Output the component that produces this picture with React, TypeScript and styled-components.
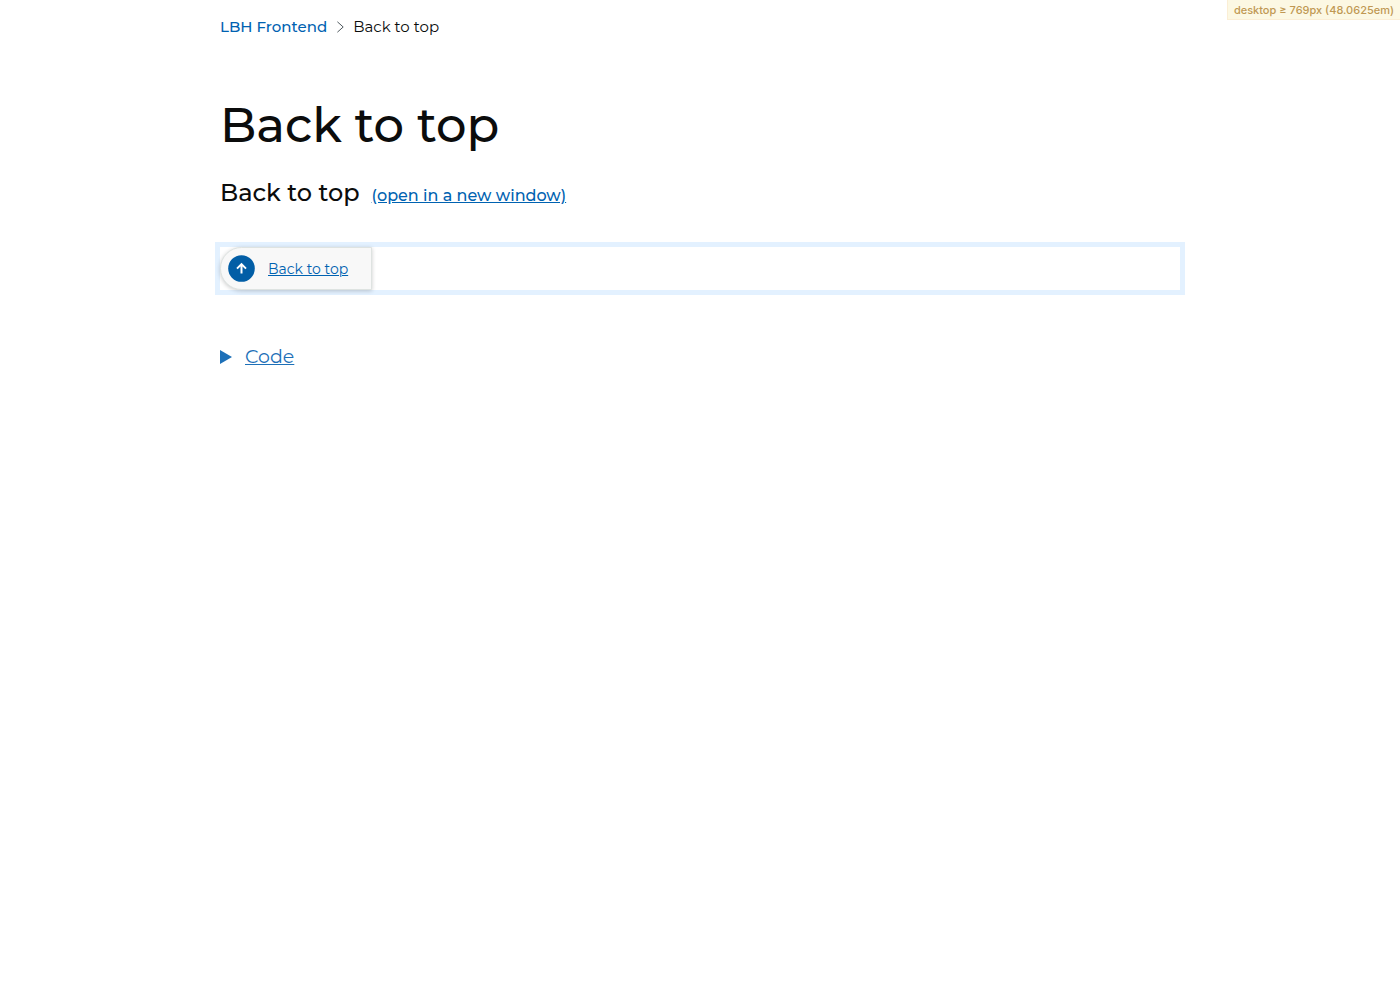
import React from "react";
import styled, { createGlobalStyle } from "styled-components";

const GlobalStyle = createGlobalStyle`
  *, *::before, *::after { box-sizing: border-box; }
  body {
    margin: 0;
    background: #fff;
    color: #0b0c0c;
    font-family: Montserrat, Inter, "Open Sans", sans-serif;
    -webkit-font-smoothing: antialiased;
  }
`;

const Container = styled.div`
  max-width: 1000px;
  margin: 0 auto;
  padding: 0 20px;
`;

const Link = styled.a`
  color: #0062b1;
  text-decoration: underline;
`;

const BreakpointLabel = styled.div`
  position: absolute;
  top: 0;
  right: 0;
  padding: 3px 6px 2px;
  border: 1px solid #fbeed5;
  border-top: 0;
  border-right: 0;
  background: #fcf8e3;
  color: #c09853;
  font-family: Inter, sans-serif;
  font-size: 11px;
  line-height: 14px;
  font-weight: 500;
`;

const BreadcrumbList = styled.ol`
  display: flex;
  align-items: center;
  gap: 9px;
  margin: 0;
  padding: 15px 0 0;
  list-style: none;
  font-size: 15px;
  line-height: 24px;
`;

const Crumb = styled.li`
  display: flex;
  align-items: center;
  gap: 9px;
`;

const CrumbLink = styled.a`
  color: #0062b1;
  font-weight: 500;
  text-decoration: none;
`;

const Title = styled.h1`
  margin: 56px 0 0;
  font-size: 48px;
  line-height: 60px;
  font-weight: 500;
`;

const ExampleHeading = styled.h2`
  display: flex;
  align-items: baseline;
  gap: 12px;
  margin: 22px 0 0;
  font-size: 24px;
  line-height: 32px;
  font-weight: 500;
`;

const NewWindowLink = styled(Link)`
  font-size: 16px;
  line-height: 24px;
`;

const Preview = styled.div`
  display: flex;
  margin: 33px -5px 0;
  border: 5px solid #e3f1ff;
`;

const BackToTop = styled(Link)`
  display: flex;
  align-items: center;
  gap: 13px;
  width: 152px;
  height: 43px;
  padding-left: 7px;
  border: 1px solid #dee3e1;
  border-radius: 22px 0 0 22px;
  background: #f8f8f8;
  box-shadow: 0 1px 4px rgba(0, 0, 0, 0.2);
  font-size: 14px;
  line-height: 20px;
  white-space: nowrap;
`;

const Details = styled.details`
  margin-top: 48px;
  color: #1d70b8;
`;

const Summary = styled.summary`
  display: flex;
  align-items: center;
  gap: 13px;
  width: fit-content;
  font-size: 19px;
  line-height: 28px;
  font-weight: 400;
  cursor: pointer;

  &::before {
    content: "";
    border-style: solid;
    border-width: 7px 0 7px 12px;
    border-color: transparent transparent transparent #1d70b8;
  }

  details[open] > &::before {
    transform: rotate(90deg);
  }
`;

const SummaryText = styled.span`
  text-decoration: underline;
`;

const ChevronIcon = () => (
  <svg width="8" height="12" viewBox="0 0 8 12" fill="none" stroke="#505a5f" aria-hidden="true">
    <path d="M1.4 .8 7.2 6 1.4 11.2" />
  </svg>
);

const ArrowIcon = () => (
  <svg width="27" height="27" viewBox="0 0 27 27" fill="none" aria-hidden="true">
    <circle cx="13.5" cy="13.5" r="13.3" fill="#025ea6" />
    <path d="M13.5 18.5V9.3M9 13.6l4.5-4.5 4.5 4.5" stroke="#fff" strokeWidth="2" />
  </svg>
);

export default function App() {
  return (
    <>
      <GlobalStyle />
      <BreakpointLabel>desktop ≥ 769px (48.0625em)</BreakpointLabel>
      <Container id="top">
        <nav aria-label="Breadcrumb">
          <BreadcrumbList>
            <Crumb>
              <CrumbLink href="#">LBH Frontend</CrumbLink>
            </Crumb>
            <Crumb aria-current="page">
              <ChevronIcon />
              Back to top
            </Crumb>
          </BreadcrumbList>
        </nav>
        <main>
          <Title>Back to top</Title>
          <ExampleHeading>
            Back to top
            <NewWindowLink href="#preview">(open in a new window)</NewWindowLink>
          </ExampleHeading>
          <Preview id="preview">
            <BackToTop href="#top">
              <ArrowIcon />
              Back to top
            </BackToTop>
          </Preview>
          <Details>
            <Summary>
              <SummaryText>Code</SummaryText>
            </Summary>
            <pre>
              <code>{'<a class="lbh-back-to-top" href="#top">Back to top</a>'}</code>
            </pre>
          </Details>
        </main>
      </Container>
    </>
  );
}
